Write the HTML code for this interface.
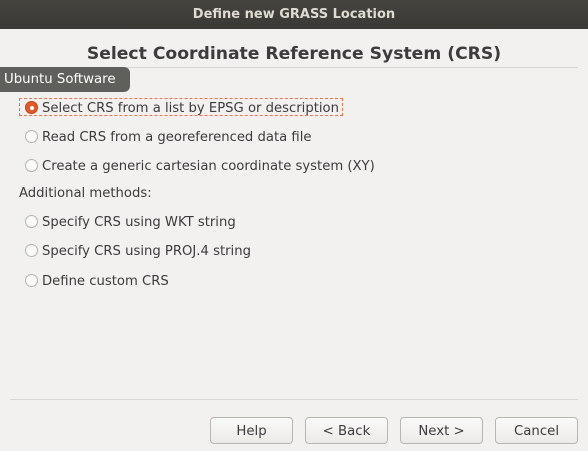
<!DOCTYPE html>
<html><head><meta charset="utf-8"><style>
*{margin:0;padding:0;box-sizing:border-box}
body{width:588px;height:451px;background:#f2f1f0;font-family:"DejaVu Sans","Liberation Sans",sans-serif;color:#3c3c3c;position:relative;overflow:hidden;font-size:13px}
.tb{position:absolute;left:0;top:0;width:588px;height:29px;background:linear-gradient(#45443f,#3a3935);color:#dfdbd2;font-weight:bold;font-size:13px;text-align:center;line-height:29px}
.h{position:absolute;left:0;width:588px;top:44px;text-align:center;font-weight:bold;font-size:17.2px;color:#3c3c3c}
.sep{position:absolute;height:1px;background:#d8d6d3}
.tip{position:absolute;left:0;top:67px;width:130px;height:25px;background:#5f5f5c;color:#fff;border-radius:0 6px 6px 0;font-size:13.3px;line-height:25px;padding-left:4px}
.r{position:absolute;left:25px;font-size:13.2px;white-space:nowrap;line-height:16px}
.r i{position:absolute;left:0;top:1px;width:13px;height:13px;border-radius:50%;border:1px solid #b5b3ae;background:#fbfbfa}
.r span{position:absolute;left:17px;top:1px}
.r.sel i{background:#e15a2b;border-color:#c34113}
.r.sel i:after{content:"";position:absolute;left:3.5px;top:3.5px;width:4px;height:4px;border-radius:50%;background:#fff}
.focus{position:absolute;left:19px;top:98px;width:324px;height:18px;border:1px dashed #e8754a}
.lbl{position:absolute;left:19px;top:186px;font-size:13.2px}
.b{position:absolute;top:417px;width:83px;height:27px;border:1px solid #b9b6b1;border-radius:4px;background:linear-gradient(#fafafa,#eceae7);text-align:center;line-height:27px;font-size:13.3px;color:#3c3c3c}
</style></head><body>
<div class="tb">Define new GRASS Location</div>
<div class="h">Select Coordinate Reference System (CRS)</div>
<div class="sep" style="left:10px;top:67px;width:568px"></div>
<div class="tip">Ubuntu Software</div>
<div class="focus"></div>
<div class="r sel" style="top:100px"><i></i><span>Select CRS from a list by EPSG or description</span></div>
<div class="r" style="top:129px"><i></i><span>Read CRS from a georeferenced data file</span></div>
<div class="r" style="top:158px"><i></i><span>Create a generic cartesian coordinate system (XY)</span></div>
<div class="lbl">Additional methods:</div>
<div class="r" style="top:214px"><i></i><span>Specify CRS using WKT string</span></div>
<div class="r" style="top:243px"><i></i><span>Specify CRS using PROJ.4 string</span></div>
<div class="r" style="top:273px"><i></i><span>Define custom CRS</span></div>
<div class="sep" style="left:10px;top:399px;width:568px"></div>
<div class="b" style="left:210px">Help</div>
<div class="b" style="left:305px">&lt; Back</div>
<div class="b" style="left:400px">Next &gt;</div>
<div class="b" style="left:495px">Cancel</div>
</body></html>
